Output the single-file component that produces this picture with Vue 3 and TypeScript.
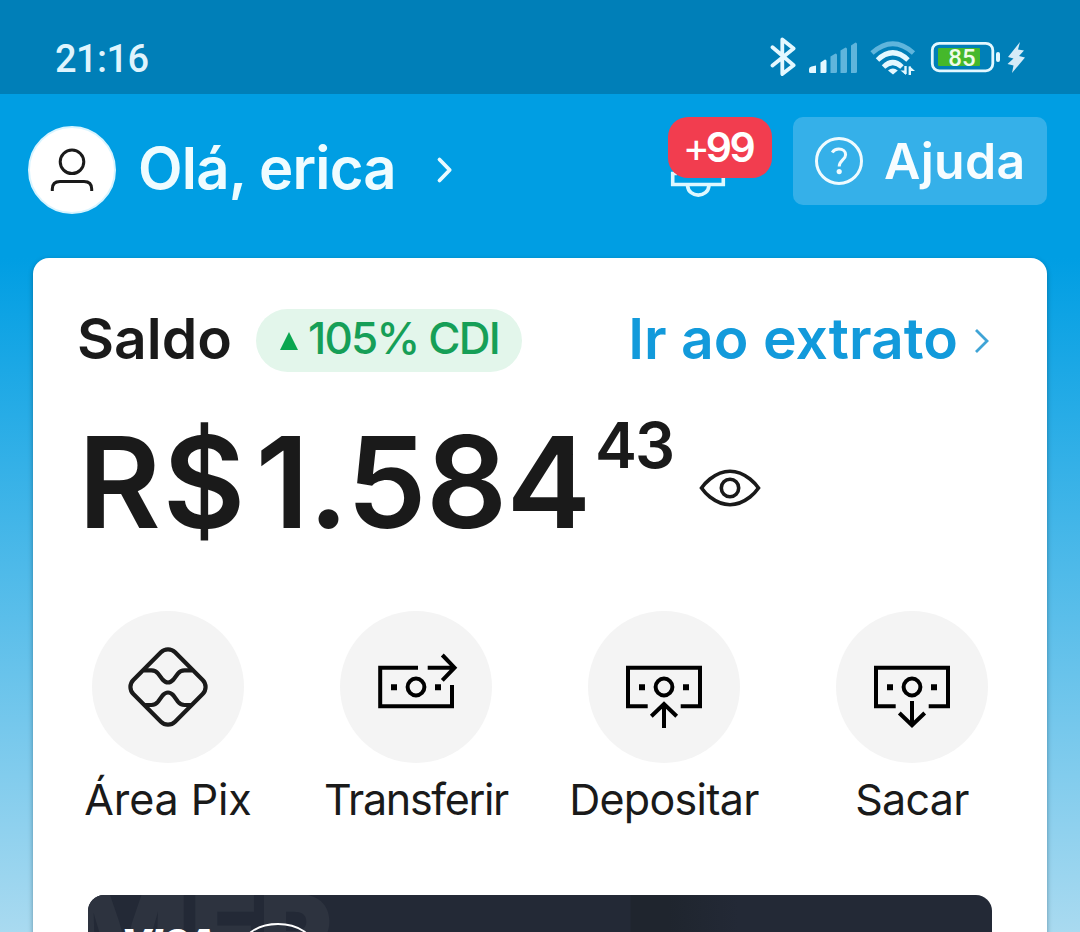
<script setup lang="ts">
type ActionKind = 'pix' | 'transfer' | 'deposit' | 'withdraw'

interface Action {
  kind: ActionKind
  label: string
}

const actions: Action[] = [
  { kind: 'pix', label: 'Área Pix' },
  { kind: 'transfer', label: 'Transferir' },
  { kind: 'deposit', label: 'Depositar' },
  { kind: 'withdraw', label: 'Sacar' },
]

const balance = { currency: 'R$', whole: '1.584', cents: '43' }
</script>

<template>
  <div class="screen">
    <div class="status">
      <span class="clock">21:16</span>
      <svg class="status-icons" width="260" height="50" viewBox="770 32 260 50" fill="none">
        <path d="M772.5 47.3 793.6 65.3 782.3 74V39.500L793.6 48.500 772.5 65.600" stroke="#e4f8ff" stroke-width="3.800" stroke-linecap="round" stroke-linejoin="round" />
        <g fill="#e4f8ff">
          <path d="M811.500 66.500 816 65.500V73H810.500Q809 73 809 71.500V69Q809 67 811.500 66.500Z" />
          <path d="M820.500 62.500 825 59.500Q826.500 59.500 826.500 61V71.500Q826.500 73 825 73H820.500Z" />
        </g>
        <g fill="#5fb5dc">
          <path d="M830.500 56.500 835.500 53.500Q837 53.500 837 55V71.500Q837 73 835.500 73H830.500Z" />
          <path d="M840.500 50.500 845.500 47.500Q847 47.500 847 49V71.500Q847 73 845.500 73H840.500Z" />
          <path d="M851 45.500 855.500 42.500Q857 42.500 857 44V71.500Q857 73 855.500 73H851Z" />
        </g>
        <path d="M872 53Q892.800 34.500 913.500 53" stroke="#5fb5dc" stroke-width="4.800" />
        <path d="M877.500 60Q892.800 45.500 908 60M883.500 67Q892.800 58 902 67" stroke="#e4f8ff" stroke-width="5" />
        <path d="M888 70.500Q892.800 66.500 897.800 70.500L893 74.500Z" fill="#e4f8ff" />
        <path d="M905.500 66V74M909.800 66.500V75" stroke="#e4f8ff" stroke-width="2.400" />
        <path d="M900.500 70.500H906V75ZM909.500 66 915 71H909.500Z" fill="#e4f8ff" />
        <rect x="932.300" y="43.300" width="60.500" height="27.500" rx="7" stroke="#e4f8ff" stroke-width="2.800" />
        <rect x="938" y="48" width="42" height="18" rx="1" fill="#45b82b" />
        <rect x="996" y="52" width="4" height="10" rx="2" fill="#e4f8ff" />
        <text class="battery-level" x="962" y="66" text-anchor="middle">85</text>
        <path d="M1020 42 1008 57 1013.500 58.500 1007.500 64 1013.500 65.500 1012 73 1025 57.500 1019 56 1024 50.500 1018 49.500Z" fill="#d6ebf7" />
      </svg>
    </div>

    <header class="header">
      <div class="avatar">
        <svg width="84" height="84" viewBox="30 128 84 84" fill="none" stroke="#1a1a1a" stroke-width="3">
          <circle cx="72" cy="161.800" r="11.800" />
          <path d="M52.300 191V189Q52.300 181.500 60 181.500H84Q91.700 181.500 91.700 189V191" />
        </svg>
      </div>
      <span class="greeting">Olá, erica</span>
      <svg class="greeting-arrow" width="20" height="30" viewBox="0 0 20 30" fill="none" stroke="#e9faff" stroke-width="3.800" stroke-linecap="round" stroke-linejoin="round">
        <path d="M3.500 4.500 13.700 15 3.500 25.500" />
      </svg>
      <div class="bell">
        <svg width="60" height="30" viewBox="668 170 60 30" fill="none" stroke="#dff8ff" stroke-width="3.600">
          <path d="M677 173.500H672.700V184.500H723.300V173.500H719M687.500 185.500C688.500 198.300 708 198.300 709 185.500" />
        </svg>
        <span class="badge"><span class="plus">+</span>99</span>
      </div>
      <button class="help" type="button">
        <svg width="48" height="48" viewBox="0 0 48 48" fill="none" stroke="#effbff" stroke-width="3">
          <circle cx="24" cy="24" r="22.500" />
          <path d="M17.200 15.500C18.800 13 21 12 23.800 12C28 12 30.600 14.300 30.600 17.700C30.600 22.700 24.200 23.300 24.200 29.500" stroke-width="3" />
          <circle cx="24.200" cy="34.600" r="2.600" fill="#effbff" stroke="none" />
        </svg>
        <span class="help-label">Ajuda</span>
      </button>
    </header>

    <main class="panel">
      <div class="top-row">
        <span class="title">Saldo</span>
        <span class="yield">
          <svg width="20" height="20" viewBox="0 0 20 20"><path d="M10 1 19 19H1Z" fill="#0aa650" /></svg>
          <span class="yield-label">105% CDI</span>
        </span>
        <a class="statement">
          <span class="statement-label">Ir ao extrato</span>
          <svg width="16" height="28" viewBox="0 0 16 28" fill="none" stroke="#3fa4d6" stroke-width="2.800"><path d="M2 3 13 14 2 25" /></svg>
        </a>
      </div>

      <div class="balance">
        <span class="whole">
          <span class="currency">{{ balance.currency }}</span>
          <span class="digits">{{ balance.whole }}</span>
        </span>
        <span class="cents">{{ balance.cents }}</span>
        <svg class="eye" width="62" height="42" viewBox="0 0 62 42" fill="none" stroke="#1a1a1a" stroke-width="3.600">
          <path d="M2.500 21Q6 16 11 12Q21 4.300 31 4.300Q41 4.300 51 12Q56 16 59.500 21Q56 26 51 30Q41 37.700 31 37.700Q21 37.700 11 30Q6 26 2.500 21Z" />
          <circle cx="31" cy="21" r="8.700" />
        </svg>
      </div>

      <nav class="actions">
        <div v-for="action in actions" :key="action.kind" class="action">
          <span class="disc">
            <svg width="152" height="152" viewBox="0 0 152 152" fill="none" stroke="#000" stroke-width="4">
              <g v-if="action.kind === 'pix'" stroke="#1a1a1a" stroke-width="4.200">
                <rect x="46.500" y="46.500" width="59" height="59" rx="10" transform="rotate(45 76 76)" />
                <path d="M52 59.300H59.500Q63.500 59.300 66 62.500L70.500 68.500Q76 74.500 81.500 68.500L86 62.500Q88.500 59.300 92.500 59.300H100" />
                <path d="M52 94H59.500Q63.500 94 66 90.800L70.500 84.500Q76 78.500 81.500 84.500L86 90.800Q88.500 94 92.500 94H100" />
              </g>
              <template v-else>
                <circle cx="76" cy="76" r="8.400" />
                <path d="M51 73.200h6v6h-6zM95 73.200h6v6h-6z" fill="#000" stroke="none" />
                <path v-if="action.kind === 'transfer'" d="M78 56.700H40.200V95.300H112V74M87.700 56.700H114M102.300 44 114.500 56.700 102.300 69.300" />
                <path v-else d="M59.700 95.300H40V56.700H112V95.300H92.700" />
                <path v-if="action.kind === 'deposit'" d="M76 117V93M63.300 105.200 76 93 88.700 105.200" />
                <path v-if="action.kind === 'withdraw'" d="M76 90V114M63.300 102 76 114.200 88.700 102" />
              </template>
            </svg>
          </span>
          <span class="action-label" :class="action.kind">{{ action.label }}</span>
        </div>
      </nav>

      <section class="bank-card">
        <span class="watermark"><span class="watermark-initial">M</span>ER</span>
        <div class="brands">
          <span class="visa">VISA</span>
          <svg width="76" height="52" viewBox="0 0 76 52" fill="none" stroke="#fff" stroke-width="1.800">
            <ellipse cx="38" cy="27" rx="36" ry="24" />
            <path d="M32 15Q38 9 44 15" />
          </svg>
        </div>
      </section>
    </main>
  </div>
</template>

<style>
body {
  margin: 0;
  overflow: hidden;
}
</style>

<style scoped>
.screen {
  width: 1080px;
  height: 932px;
  overflow: hidden;
  background: linear-gradient(180deg, #009ee3 0, #009ee3 258px, #a9daf0 932px);
  font-family: Inter, 'Liberation Sans', sans-serif;
  color: #1a1a1a;
  white-space: nowrap;
}

.status {
  display: flex;
  justify-content: space-between;
  box-sizing: border-box;
  height: 94px;
  padding: 32px 50px 0 55px;
  background: #007fb8;
}

.clock {
  font: 500 38px/55px Roboto, sans-serif;
  letter-spacing: -0.6px;
  color: #dff4fd;
}

.battery-level {
  font: 500 24px Roboto, sans-serif;
  fill: #effbea;
}

.header {
  display: flex;
  align-items: flex-start;
  box-sizing: border-box;
  height: 164px;
  padding: 23px 33px 0 28px;
  color: #effcff;
}

.avatar {
  box-sizing: border-box;
  width: 88px;
  height: 88px;
  margin-top: 9px;
  border: 2px solid #d8f4ff;
  border-radius: 50%;
  background: #fff;
}

.greeting {
  width: 274px;
  margin: 16px 0 0 22px;
  font-size: 58px;
  font-weight: 600;
  line-height: 70px;
  letter-spacing: -0.8px;
}

.greeting-arrow {
  margin: 38px 0 0 24px;
}

.bell {
  position: relative;
  width: 104px;
  height: 88px;
  margin-left: auto;
}

.bell svg {
  display: block;
  margin-top: 53px;
}

.badge {
  position: absolute;
  top: 0;
  left: 0;
  width: 104px;
  height: 61px;
  border-radius: 20px;
  background: #f23d4f;
  font-size: 41px;
  font-weight: 600;
  line-height: 61px;
  letter-spacing: -2.5px;
  text-indent: -4px;
  text-align: center;
  color: #fff;
}

.plus {
  font-weight: 400;
  letter-spacing: -4px;
}

.help {
  display: flex;
  align-items: center;
  box-sizing: border-box;
  width: 254px;
  height: 88px;
  margin: 0 0 0 21px;
  padding: 0 0 0 22px;
  border: 0;
  border-radius: 10px;
  background: #35b0e9;
  font-family: inherit;
  color: #f7fdff;
}

.help-label {
  margin: 0 0 0 21px;
  font-size: 50px;
  font-weight: 600;
  line-height: 60px;
  letter-spacing: 0.3px;
}

.panel {
  box-sizing: border-box;
  width: 1014px;
  height: 690px;
  margin: 0 33px;
  padding-top: 51px;
  border-radius: 16px;
  background: #fff;
  box-shadow: 0 2px 5px rgba(0, 40, 60, 0.4);
}

.top-row {
  display: flex;
  height: 63px;
  padding: 0 57px 0 44px;
}

.title {
  width: 179px;
  font-size: 57px;
  font-weight: 600;
  line-height: 60px;
}

.yield {
  display: flex;
  align-items: center;
  box-sizing: border-box;
  width: 266px;
  height: 63px;
  padding-left: 23px;
  border-radius: 32px;
  background: #e3f6eb;
  color: #169f57;
}

.yield-label {
  margin: -5px 0 0 9px;
  font-size: 44px;
  font-weight: 500;
  letter-spacing: -1.8px;
}

.statement {
  display: flex;
  margin-left: auto;
  color: #129adb;
}

.statement-label {
  font-size: 57px;
  font-weight: 600;
  line-height: 60px;
  letter-spacing: 0;
}

.statement svg {
  margin: 18px 0 0 16px;
}

.balance {
  display: flex;
  height: 239px;
  padding-left: 45px;
}

.whole {
  display: flex;
  width: 517px;
  font-size: 127px;
  font-weight: 600;
  line-height: 154px;
  margin-top: 33px;
}

.currency {
  letter-spacing: 2px;
}

.digits {
  margin-left: 8px;
  letter-spacing: -0.8px;
}

.cents {
  width: 85px;
  font-size: 63px;
  font-weight: 600;
  line-height: 76px;
  letter-spacing: -2px;
  margin-top: 35px;
}

.eye {
  margin: 95px 0 0 19px;
}

.actions {
  display: flex;
  justify-content: center;
}

.action {
  display: flex;
  flex-direction: column;
  align-items: center;
  width: 248px;
  flex: none;
}

.disc {
  width: 152px;
  height: 152px;
  border-radius: 50%;
  background: #f4f4f4;
}

.disc svg {
  display: block;
}

.action-label {
  margin-top: 8px;
  font-size: 43px;
  font-weight: 400;
  line-height: 56px;
  letter-spacing: -0.7px;
}

.action-label.pix {
  letter-spacing: -0.1px;
}

.action-label.transfer {
  letter-spacing: -1.3px;
}

.bank-card {
  position: relative;
  box-sizing: border-box;
  width: 904px;
  height: 53px;
  margin: 68px 0 0 55px;
  overflow: hidden;
  border-radius: 16px 16px 0 0;
  background: linear-gradient(90deg, #232936 542px, #1f252e 543px, #1f252e 580px, #232936 650px);
}

.watermark {
  position: absolute;
  top: -26px;
  left: -5px;
  font: 900 112px/130px Inter, sans-serif;
  color: #2d333f;
}

.watermark-initial {
  display: inline-block;
  transform: scaleX(1.2);
  transform-origin: 100% 50%;
}

.brands {
  position: relative;
  display: flex;
  padding: 26px 0 0 33px;
}

.visa {
  width: 119px;
  font: italic 900 38px/45px Inter, sans-serif;
  color: #fff;
}
</style>
